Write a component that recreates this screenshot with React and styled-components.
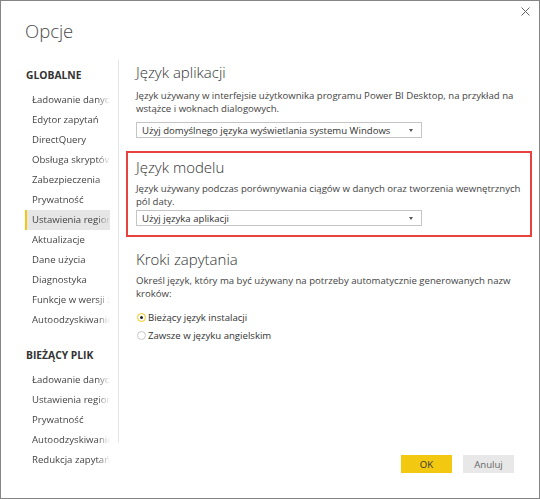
import React from 'react'
import styled, { createGlobalStyle } from 'styled-components'

const GlobalStyle = createGlobalStyle`
    html, body {
        margin: 0;
        padding: 0;
        background: #fff;
    }
    body {
        font-family: "Open Sans", "Noto Sans", sans-serif;
        color: #444;
    }
`

const Dialog = styled.div`
    width: 540px;
    height: 499px;
    box-sizing: border-box;
    border: 1px solid #858585;
    background: #fff;
    display: flex;
    flex-direction: column;
`

const Header = styled.div`
    height: 59px;
    display: flex;
    justify-content: space-between;
    align-items: flex-start;
`

const Title = styled.h1`
    margin: 16px 0 0 24px;
    font-size: 18.5px;
    line-height: 28px;
    font-weight: 300;
    color: #4a4a4a;
`

const Close = styled.button`
    margin: 6px 9px 0 0;
    padding: 0;
    border: none;
    background: none;
    width: 9px;
    height: 9px;
    display: flex;
`

const Body = styled.div`
    flex: 1;
    display: flex;
`

const Sidebar = styled.nav`
    flex: 0 0 117px;
    box-sizing: border-box;
    padding: 5px 0 0 24px;
`

const SideHeading = styled.div`
    margin: ${p => p.$gap || 0}px 0 5px 1px;
    font-size: 10.3px;
    line-height: 20px;
    font-weight: 700;
    color: #333;
`

const SideItem = styled.div`
    width: 85px;
    height: 20px;
    box-sizing: border-box;
    padding-left: 7px;
    font-size: 9.6px;
    line-height: 20px;
    color: #444;
    white-space: nowrap;
    overflow: hidden;
    background: ${p => p.$active ? '#e6e6e6' : 'transparent'};
    box-shadow: ${p => p.$active ? 'inset 2px 0 0 #f2c811' : 'none'};

    span {
        display: block;
        overflow: hidden;
        -webkit-mask-image: linear-gradient(to right, #000 84%, transparent 100%);
        mask-image: linear-gradient(to right, #000 84%, transparent 100%);
    }
`

const Main = styled.div`
    flex: 1 1 auto;
    min-width: 0;
    display: flex;
    flex-direction: column;
`

const Panel = styled.div`
    height: 383px;
    box-sizing: border-box;
    border-left: 1px solid #e4e4e4;
    padding: 1px 16px 0 17px;
`

const SectionTitle = styled.h2`
    margin: ${p => p.$gap || 0}px 0 0 0;
    padding: 0;
    font-size: 15px;
    line-height: 22px;
    font-weight: 300;
    color: #333;
`

const Description = styled.p`
    margin: ${p => p.$gap || 4}px 0 0 0;
    padding: 0;
    font-size: 9.6px;
    line-height: 13px;
    color: #444;
`

const Select = styled.div`
    margin-top: ${p => p.$gap || 6}px;
    width: 286px;
    height: 16px;
    box-sizing: border-box;
    border: 1px solid #c4c4c4;
    padding: 0 8px 0 5px;
    display: flex;
    align-items: center;
    justify-content: space-between;
    font-size: 9.6px;
    color: #333;
    white-space: nowrap;
`

const Arrow = styled.span`
    width: 0;
    height: 0;
    border-left: 2.5px solid transparent;
    border-right: 2.5px solid transparent;
    border-top: 3px solid #555;
`

const Highlight = styled.div`
    margin: 13px -9px 0 -10px;
    border: 2px solid #e8423f;
    padding: 3px 5px 9px 8px;
`

const RadioGroup = styled.div`
    margin-top: 8px;
`

const Radio = styled.label`
    height: 18px;
    display: flex;
    align-items: center;
    gap: 2px;
    font-size: 9.6px;
    color: #333;
`

const Circle = styled.span`
    margin-left: 1px;
    width: 9px;
    height: 9px;
    box-sizing: border-box;
    border-radius: 50%;
    border: 1px solid ${p => p.$checked ? '#f2c811' : '#c8c8c8'};
    display: flex;
    align-items: center;
    justify-content: center;

    &::after {
        content: '';
        width: 3px;
        height: 3px;
        border-radius: 50%;
        background: ${p => p.$checked ? '#222' : 'transparent'};
    }
`

const Footer = styled.div`
    display: flex;
    justify-content: flex-end;
    gap: 11px;
    padding: 12px 25px 0 0;
`

const Button = styled.button`
    width: 51px;
    height: 18px;
    border: none;
    padding: 0;
    font-family: inherit;
    font-size: 9.6px;
    background: ${p => p.$primary ? '#f2c811' : '#e8e8e8'};
    color: ${p => p.$primary ? '#333' : '#666'};
`

const globalItems = [
    'Ładowanie danych', 'Edytor zapytań', 'DirectQuery', 'Obsługa skryptów',
    'Zabezpieczenia', 'Prywatność', 'Ustawienia regionalne', 'Aktualizacje',
    'Dane użycia', 'Diagnostyka', 'Funkcje w wersji zapoznawczej', 'Autoodzyskiwanie',
]

const fileItems = [
    'Ładowanie danych', 'Ustawienia regionalne', 'Prywatność', 'Autoodzyskiwanie', 'Redukcja zapytań',
]

const App = () => {
    return (
        <>
            <GlobalStyle />
            <Dialog>
                <Header>
                    <Title>Opcje</Title>
                    <Close aria-label='Zamknij'>
                        <svg width='9' height='9' viewBox='0 0 9 9'>
                            <path d='M0.5 0.5 L8.5 8.5 M8.5 0.5 L0.5 8.5' stroke='#666' strokeWidth='1' fill='none' />
                        </svg>
                    </Close>
                </Header>
                <Body>
                    <Sidebar>
                        <SideHeading>GLOBALNE</SideHeading>
                        {globalItems.map((item, index) => (
                            <SideItem key={index} $active={item === 'Ustawienia regionalne'}>
                                <span>{item}</span>
                            </SideItem>
                        ))}
                        <SideHeading $gap={15}>BIEŻĄCY PLIK</SideHeading>
                        {fileItems.map((item, index) => (
                            <SideItem key={index}><span>{item}</span></SideItem>
                        ))}
                    </Sidebar>
                    <Main>
                        <Panel>
                            <SectionTitle>Język aplikacji</SectionTitle>
                            <Description $gap={6}>
                                Język używany w interfejsie użytkownika programu Power BI Desktop, na przykład na wstążce i woknach dialogowych.
                            </Description>
                            <Select $gap={7}>
                                Użyj domyślnego języka wyświetlania systemu Windows
                                <Arrow />
                            </Select>

                            <Highlight>
                                <SectionTitle>Język modelu</SectionTitle>
                                <Description>
                                    Język używany podczas porównywania ciągów w danych oraz tworzenia wewnętrznych pól daty.
                                </Description>
                                <Select $gap={2}>
                                    Użyj języka aplikacji
                                    <Arrow />
                                </Select>
                            </Highlight>

                            <SectionTitle $gap={11}>Kroki zapytania</SectionTitle>
                            <Description>
                                Określ język, który ma być używany na potrzeby automatycznie generowanych nazw kroków:
                            </Description>
                            <RadioGroup>
                                <Radio><Circle $checked />Bieżący język instalacji</Radio>
                                <Radio><Circle />Zawsze w języku angielskim</Radio>
                            </RadioGroup>
                        </Panel>
                        <Footer>
                            <Button $primary>OK</Button>
                            <Button>Anuluj</Button>
                        </Footer>
                    </Main>
                </Body>
            </Dialog>
        </>
    )
}

export default App
